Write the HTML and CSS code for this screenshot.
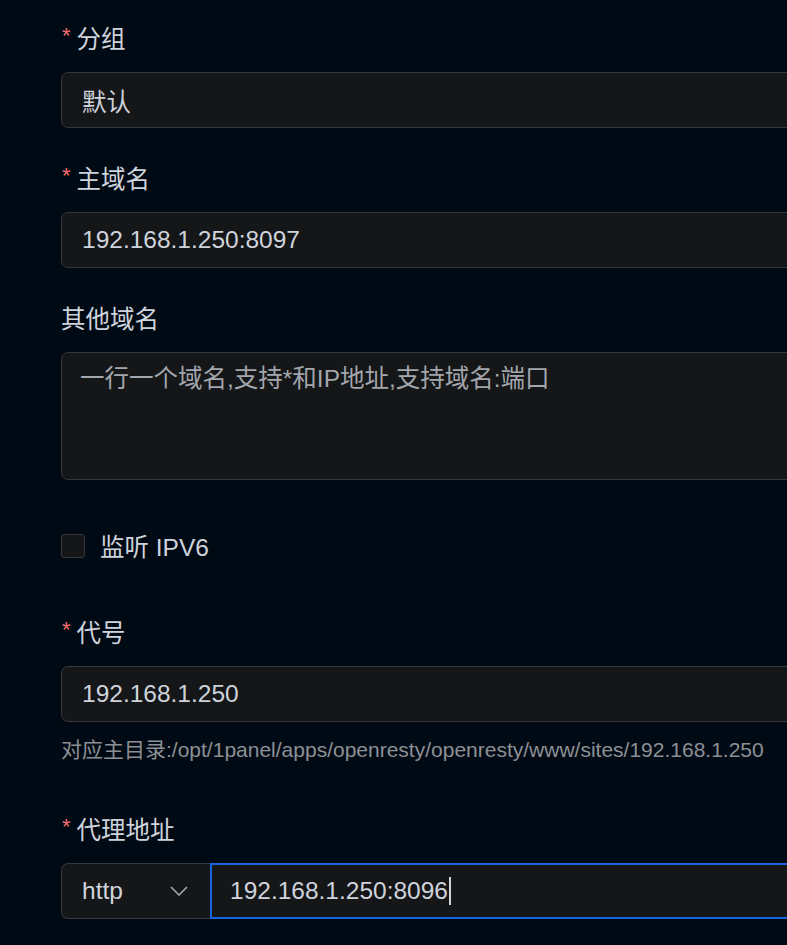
FILE: index.html
```html
<!DOCTYPE html>
<html lang="zh-CN">
<head>
    <meta charset="UTF-8">
    <meta name="viewport" content="width=device-width, initial-scale=1.0">
    <title>创建网站</title>
    <link rel="stylesheet" href="styles.css">
</head>
<body>
    <form class="site-form">
        <div class="form-item">
            <label class="item-label required">分组</label>
            <div class="field">默认</div>
        </div>

        <div class="form-item">
            <label class="item-label required">主域名</label>
            <div class="field">192.168.1.250:8097</div>
        </div>

        <div class="form-item">
            <label class="item-label">其他域名</label>
            <div class="field field-area">
                <span class="placeholder">一行一个域名,支持*和IP地址,支持域名:端口</span>
            </div>
        </div>

        <div class="form-item check-item">
            <span class="checkbox"></span>
            <span class="check-text">监听 IPV6</span>
        </div>

        <div class="form-item help-item">
            <label class="item-label required">代号</label>
            <div class="field">192.168.1.250</div>
            <div class="help">对应主目录:/opt/1panel/apps/openresty/openresty/www/sites/192.168.1.250</div>
        </div>

        <div class="form-item">
            <label class="item-label required">代理地址</label>
            <div class="field-group">
                <div class="field proto">
                    <span>http</span>
                    <svg class="chevron" width="18" height="10" viewBox="0 0 18 10">
                        <path d="M1 1 L9 9 L17 1" fill="none" stroke="#a3a6ad" stroke-width="1.6"/>
                    </svg>
                </div>
                <div class="field address">192.168.1.250:8096<span class="caret"></span></div>
            </div>
        </div>
    </form>
</body>
</html>
```

FILE: styles.css
```css
html, body {
    margin: 0;
    padding: 0;
    background: #000a14;
    overflow: hidden;
}

body {
    width: 787px;
    height: 945px;
    font-family: "Liberation Sans", Arial, "Noto Sans CJK SC", sans-serif;
    color: #cfd3dc;
}

.site-form {
    width: 1000px;
    padding: 20px 0 0 61px;
}

.form-item {
    margin-bottom: 32px;
}

.item-label {
    display: flex;
    align-items: center;
    box-sizing: border-box;
    height: 38px;
    padding-bottom: 3px;
    font-size: 24.5px;
    margin-bottom: 14px;
    color: #cfd3dc;
}

.item-label.required::before {
    content: "*";
    color: #f56c6c;
    margin: -4px 6px 0 1px;
    font-size: 22px;
}

.field {
    box-sizing: border-box;
    height: 56px;
    display: flex;
    align-items: center;
    padding: 0 20px;
    background: #141618;
    border: 1px solid #36383c;
    border-radius: 7px;
    font-size: 24.5px;
    color: #cfd3dc;
}

.field-area {
    height: 128px;
    align-items: flex-start;
    padding: 8px 18px;
    line-height: 36px;
}

.placeholder {
    color: #a3a6ad;
}

.check-item {
    height: 70px;
    display: flex;
    align-items: center;
}

.checkbox {
    box-sizing: border-box;
    width: 24px;
    height: 24px;
    border: 1px solid #36383c;
    border-radius: 3px;
    background: #141618;
    margin: 0 15px 2px 0;
}

.check-text {
    font-size: 24.5px;
    color: #cfd3dc;
    margin-bottom: 4px;
}

.help-item {
    margin-bottom: 46px;
}

.help {
    margin-top: 13px;
    font-size: 21px;
    line-height: 30px;
    color: #8d9095;
}

.field-group {
    display: flex;
}

.proto {
    width: 149px;
    flex: none;
    justify-content: space-between;
    padding: 0 22px 0 20px;
    border-radius: 7px 0 0 7px;
    border-right: none;
}

.chevron {
    display: block;
}

.address {
    flex: 1;
    border: 2px solid #1764dc;
    border-radius: 0 7px 7px 0;
    padding: 0 18px;
}

.caret {
    display: inline-block;
    width: 2px;
    height: 28px;
    margin-left: 1px;
    background: #cfd3dc;
}
```
